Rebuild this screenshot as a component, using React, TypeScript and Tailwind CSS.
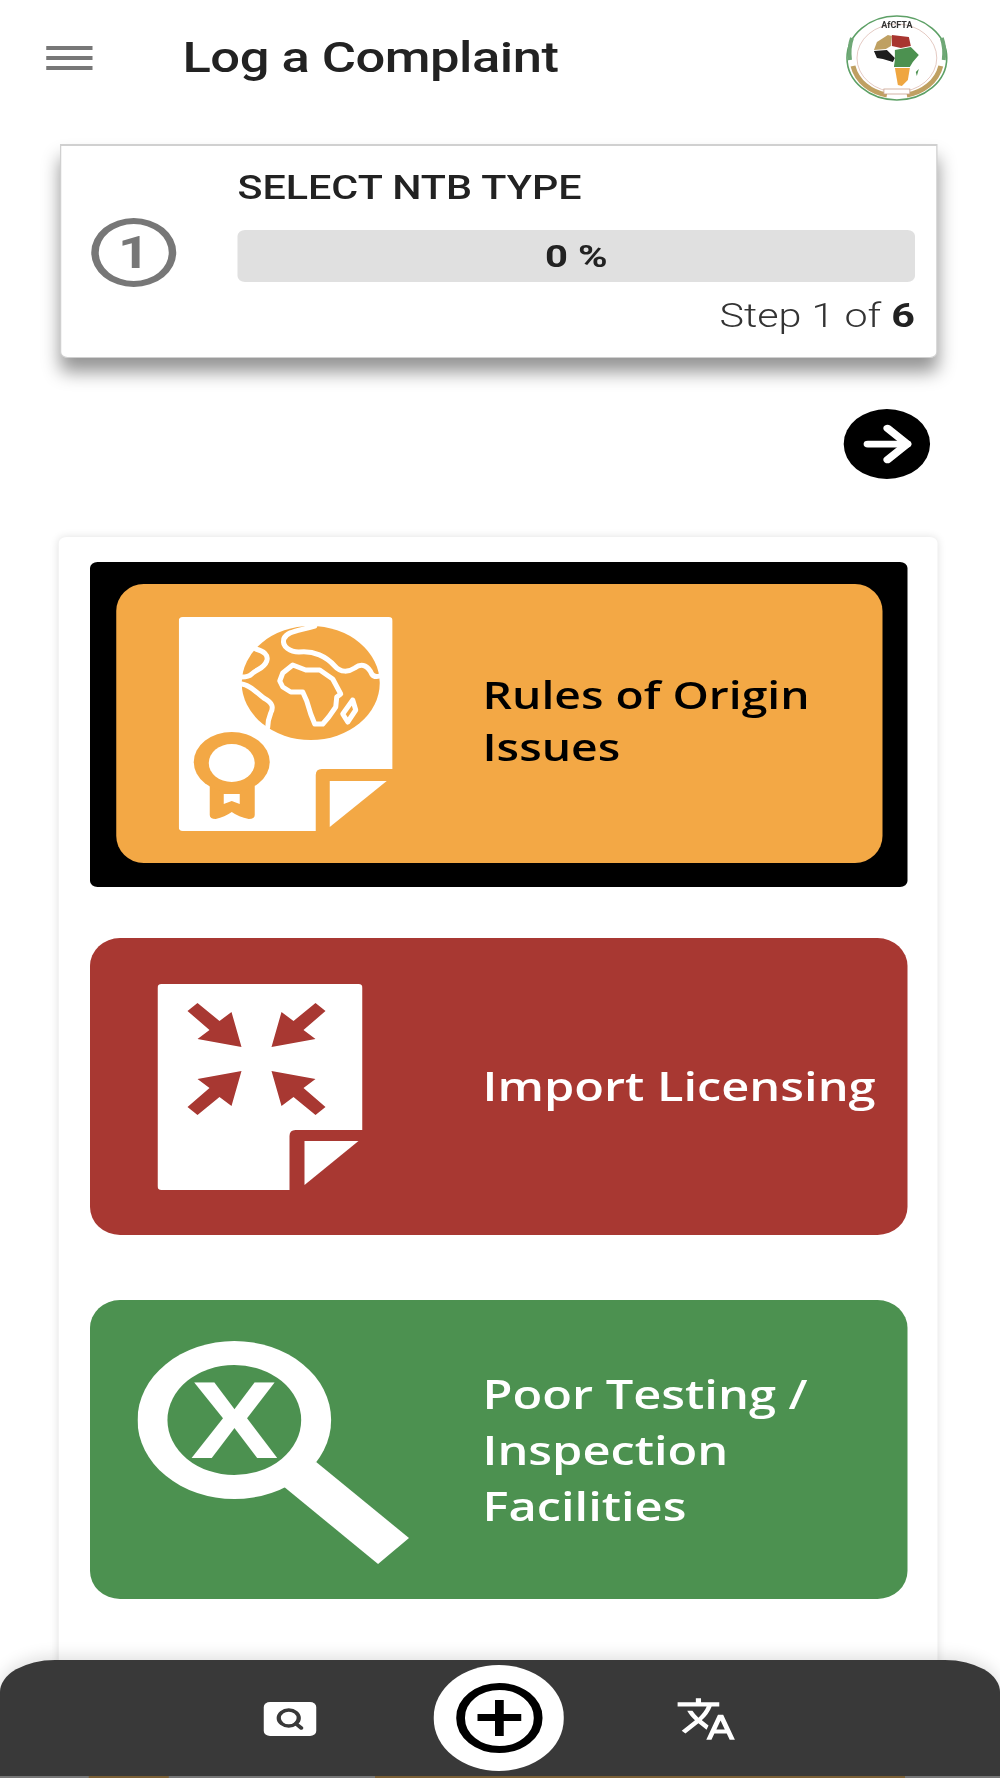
import { ArrowRight, Search } from "lucide-react";
import { MdTranslate } from "react-icons/md";

// the source is a phone capture stretched sideways, so everything is laid out on 800px and widened by 1.25
const Paper = ({ w, h, nx, ny, tx, ty, bx, by, fill, children }: any) => (
  <svg viewBox={`0 0 ${w} ${h}`} preserveAspectRatio="none" style={{ width: w * 0.8, height: h }}>
    <path
      d={`M4 0H${w - 4}Q${w} 0 ${w} 4V${ny}H${nx + 6}Q${nx} ${ny} ${nx} ${ny + 6}V${h}H4Q0 ${h} 0 ${h - 4}V4Q0 0 4 0Z`}
      fill="#fff"
    />
    <polygon points={`${tx},${ty} ${bx},${ty} ${tx},${by}`} fill="#fff" />
    {children(fill)}
  </svg>
);

const RulesIcon = () => (
  <Paper w={214} h={214} nx={137} ny={152} tx={151} ty={164} bx={208} by={210} fill="#F3A845">
    {(c: string) => (
      <>
        <ellipse cx="132" cy="66" rx="69" ry="57" fill={c} />
        <g fill="none" stroke="#fff" strokeWidth="5" strokeLinejoin="round" strokeLinecap="round">
          <path d="M136 9C120 14 108 14 105 22C103 30 112 35 120 35C135 33 148 40 156 49C162 56 170 55 176 51C184 45 190 50 193 57C195 60 198 60 201 59" />
          <path d="M77 32C85 34 90 38 88 44C85 52 78 52 73 57C70 60 66 60 63 60" />
          <path d="M63 67C72 68 78 76 85 81C94 86 95 90 92 96C90 101 89 105 89 110" />
          <path d="M114 48L104 56L101 64L104 70L112 75L124 75L128 84L132 97L136 107L144 107L150 100L157 90L158 80L162 77L154 62L141 53L127 53Z" />
          <path d="M174 83L164 97L169 105L177 93Z" />
        </g>
        <path d="M31 160V198Q31 202 37 202Q46 200 53 195Q60 200 70 202Q76 202 76 198V160Z" fill={c} />
        <ellipse cx="53" cy="145" rx="38" ry="30" fill={c} />
        <ellipse cx="53" cy="146" rx="23" ry="19" fill="#fff" />
        <path d="M45 177L61 177L61 187L53 184L45 187Z" fill="#fff" />
      </>
    )}
  </Paper>
);

const arrow = "30,27 40,19 62,37 74,28 84,63 40,55 52,46";

const ImportIcon = () => (
  <Paper w={205} h={206} nx={132} ny={146} tx={147} ty={157} bx={201} by={201} fill="#A83832">
    {(c: string) => (
      <g fill={c}>
        <polygon points={arrow} />
        <polygon points={arrow} transform="matrix(-1 0 0 1 198 0)" />
        <polygon points={arrow} transform="matrix(1 0 0 -1 0 150)" />
        <polygon points={arrow} transform="matrix(-1 0 0 -1 198 150)" />
      </g>
    )}
  </Paper>
);

const TestingIcon = () => (
  <svg viewBox="0 0 273 225" preserveAspectRatio="none" className="w-[218px] h-[225px] mt-[5px]">
    <polygon points="179,122 272,198 241,224 147,147" fill="#fff" />
    <ellipse cx="97" cy="80" rx="97" ry="79" fill="#fff" />
    <ellipse cx="97" cy="80" rx="67" ry="55" fill="#4C9150" />
    <text
      x="53"
      y="118"
      textLength="88"
      lengthAdjust="spacingAndGlyphs"
      fontSize="109"
      fontWeight="700"
      fontFamily="Liberation Sans, sans-serif"
      fill="#fff"
    >
      X
    </text>
  </svg>
);

const Logo = () => (
  <svg viewBox="0 0 104 88" preserveAspectRatio="none" className="w-[83px] h-[88px] blur-[0.5px]">
    <ellipse cx="52" cy="44" rx="50" ry="42" fill="#fff" stroke="#5DA066" strokeWidth="1.6" />
    <ellipse cx="52" cy="44" rx="40" ry="34" fill="none" stroke="#DDBDB4" strokeWidth="0.8" />
    <path d="M8 52C12 68 26 78 42 81" fill="none" stroke="#BFA062" strokeWidth="5" />
    <path d="M96 52C92 68 78 78 62 81" fill="none" stroke="#BFA062" strokeWidth="5" />
    <path d="M7 24C4 32 4 38 5 46" fill="none" stroke="#6FA876" strokeWidth="4" />
    <path d="M97 24C100 32 100 38 99 46" fill="none" stroke="#6FA876" strokeWidth="4" />
    <path d="M32 28L43 21L47 22L46 32L41 35L29 36Z" fill="#BFA062" />
    <path d="M47 21L64 23L66 32L56 34L47 32Z" fill="#A8352F" />
    <path d="M29 37L42 36L50 44L48 48L38 45L32 44Z" fill="#1c1c1c" />
    <path d="M50 36L66 33L74 41L68 48L65 53L49 53L50 46Z" fill="#4C9150" />
    <path d="M50 54L65 54L63 66L57 72L53 71Z" fill="#EFA640" />
    <path d="M71 58L74 55L72 62Z" fill="#4C9150" />
    <rect x="39" y="75" width="26" height="5" fill="#fff" stroke="#C9A08E" strokeWidth="0.8" />
    <text
      x="52"
      y="14"
      textAnchor="middle"
      fontSize="9"
      fontWeight="700"
      fontFamily="Roboto, sans-serif"
      fill="#333"
    >
      AfCFTA
    </text>
  </svg>
);

const label = "font-['Open_Sans',sans-serif] font-semibold text-[39px]";

export default function App() {
  return (
    <div className="relative w-[800px] h-[1778px] overflow-hidden bg-white origin-top-left scale-x-[1.25] font-['Roboto',sans-serif]">
      <header className="h-[116px] flex items-center pl-[37px] pr-[41px]">
        <div className="w-[37px] flex flex-col gap-[6px]">
          <div className="h-[4px] bg-[#777]" />
          <div className="h-[4px] bg-[#777]" />
          <div className="h-[4px] bg-[#777]" />
        </div>
        <h1 className="ml-[72px] text-[42px] font-medium tracking-[-0.4px] text-[#222] leading-none">Log a Complaint</h1>
        <div className="ml-auto mt-[0px]">
          <Logo />
        </div>
      </header>

      <div className="mt-[28px] ml-[48px] w-[702px] h-[214px] border border-[#d0d0d0] border-t-2 rounded-b-[6px] bg-white shadow-[0_14px_16px_rgba(0,0,0,0.42)] flex">
        <div className="w-[141px] shrink-0 pl-[24px] pt-[72px]">
          <div className="w-[68px] h-[69px] rounded-[50%] border-[6px] border-[#777] flex items-center justify-center text-[#777] text-[44px] font-bold leading-none">
            1
          </div>
        </div>
        <div className="w-[542px] pt-[24px]">
          <div className="text-[33px] font-medium text-[#222] leading-[36px]">SELECT NTB TYPE</div>
          <div className="mt-[24px] h-[52px] rounded-[6px] bg-[#e0e0e0] flex items-center justify-center text-[32px] font-bold text-[#222]">
            0 %
          </div>
          <div className="mt-[14px] text-right text-[33px] font-light text-[#333] leading-[40px]">
            Step 1 of <span className="font-bold text-[#222]">6</span>
          </div>
        </div>
      </div>

      <div className="mt-[51px] mr-[56px] flex justify-end">
        <div className="w-[69px] h-[70px] rounded-full bg-black flex items-center justify-center">
          <ArrowRight className="text-white w-[54px] h-[54px]" strokeWidth={3} />
        </div>
      </div>

      <div className="mt-[58px] ml-[47px] w-[703px] h-[1300px] bg-white rounded-[6px] shadow-[0_0_8px_rgba(0,0,0,0.12)] pl-[25px] pr-[24px] pt-[25px]">
        <div className="h-[325px] rounded-[6px] bg-black pl-[21px] pr-[20px] pt-[22px]">
          <div className="h-[279px] rounded-[22px/27px] bg-[#F3A845] flex items-center text-black">
            <div className="w-[293px] shrink-0 pl-[50px]">
              <RulesIcon />
            </div>
            <div className="font-['Open_Sans',sans-serif] font-semibold text-[37px] leading-[52px] -mt-[5px]">
              Rules of Origin
              <br />
              Issues
            </div>
          </div>
        </div>

        <div className="mt-[51px] h-[297px] rounded-[24px/28px] bg-[#A83832] flex items-center text-white">
          <div className="w-[314px] shrink-0 pl-[54px]">
            <ImportIcon />
          </div>
          <div className={label}>Import Licensing</div>
        </div>

        <div className="mt-[65px] h-[299px] rounded-[24px/28px] bg-[#4C9150] flex items-center text-white">
          <div className="w-[314px] shrink-0 pl-[38px]">
            <TestingIcon />
          </div>
          <div className={`${label} leading-[56px]`}>
            Poor Testing /
            <br />
            Inspection
            <br />
            Facilities
          </div>
        </div>
      </div>

      <nav className="absolute left-0 right-0 top-[1660px] h-[118px] bg-[#393939] rounded-t-[44px_32px] shadow-[0_-4px_14px_rgba(0,0,0,0.12)] overflow-hidden">
        <div className="absolute left-[211px] top-[42px] w-[42px] h-[34px] rounded-[5px] bg-white flex items-center justify-center">
          <Search className="text-[#393939] w-[24px] h-[24px]" strokeWidth={3.4} />
        </div>
        <div className="absolute left-[347px] top-[5px] w-[104px] h-[106px] rounded-full bg-white flex items-center justify-center">
          <div className="relative w-[69px] h-[70px] rounded-full border-[7px] border-black">
            <div className="absolute left-[10px] right-[10px] top-[24px] h-[7px] bg-black" />
            <div className="absolute top-[10px] bottom-[10px] left-[24px] w-[7px] bg-black" />
          </div>
        </div>
        <div className="absolute left-[540px] top-[34px] text-white">
          <MdTranslate className="w-[50px] h-[50px]" />
        </div>
        <div className="absolute left-0 right-0 bottom-0 h-[2px] bg-[#777] flex">
          <div className="ml-[71px] w-[64px] bg-[#7a5f35]" />
          <div className="ml-[165px] w-[424px] bg-[#7a5f35]" />
        </div>
      </nav>
    </div>
  );
}
